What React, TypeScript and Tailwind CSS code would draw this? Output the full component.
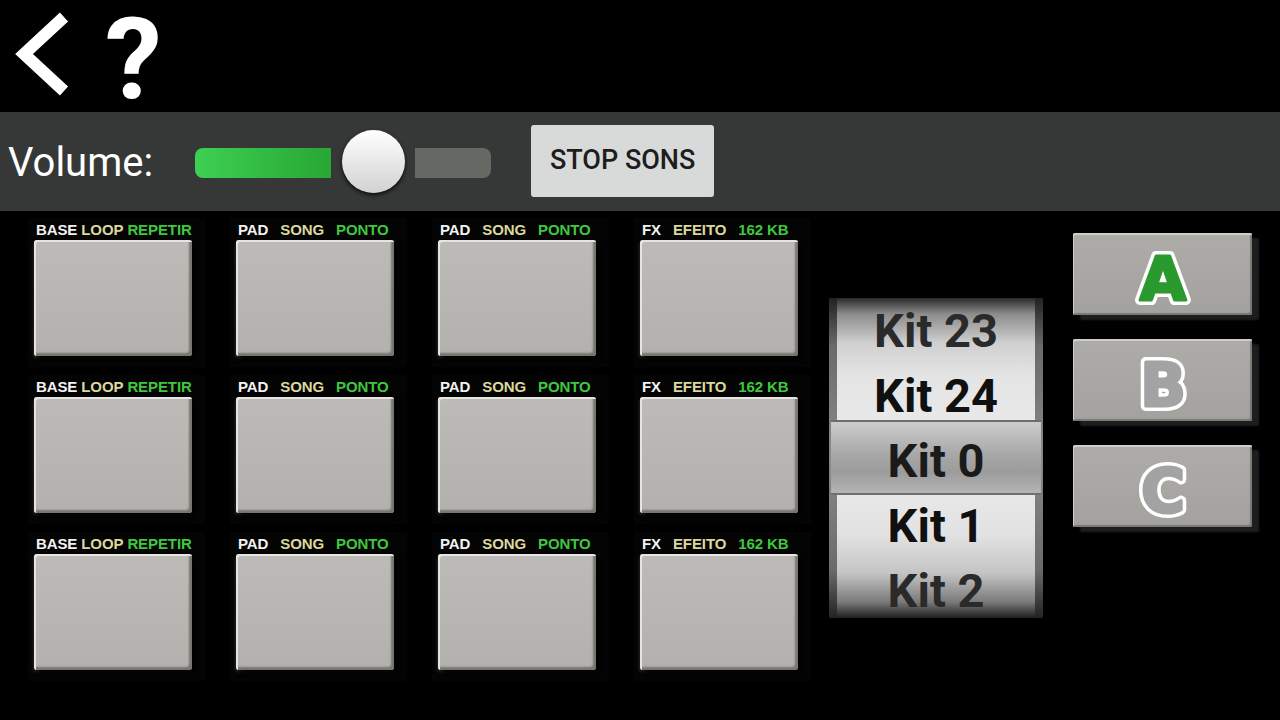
import React from 'react';

type Label = { a: string; b: string; c: string; spaced?: boolean };

const columns: Label[] = [
  { a: 'BASE', b: 'LOOP', c: 'REPETIR' },
  { a: 'PAD', b: 'SONG', c: 'PONTO', spaced: true },
  { a: 'PAD', b: 'SONG', c: 'PONTO', spaced: true },
  { a: 'FX', b: 'EFEITO', c: '162 KB', spaced: true },
];

const kits = [
  { name: 'Kit 23', color: 'text-[#2a2a2a]' },
  { name: 'Kit 24', color: 'text-[#101010]' },
  { name: 'Kit 0', color: 'text-[#1a1a1a]' },
  { name: 'Kit 1', color: 'text-[#101010]' },
  { name: 'Kit 2', color: 'text-[#2a2a2a]' },
];

function Pad({ label }: { label: Label }) {
  return (
    <div className="w-[177px] h-[149px] bg-[#040404] flex flex-col pt-[2px] pl-[6px]">
      <div
        className={`h-[18px] pl-[2px] flex items-center text-[15px] font-bold leading-none tracking-[-0.1px] ${
          label.spaced ? 'gap-[12px]' : 'gap-[4px]'
        }`}
        style={{ fontFamily: '"Liberation Sans", Arial, sans-serif' }}
      >
        <span className="text-[#f2f2f2]">{label.a}</span>
        <span className="text-[#dcd79c]">{label.b}</span>
        <span className="text-[#3fc83f]">{label.c}</span>
      </div>
      <div className="mt-[2px] w-[158px] h-[116px] rounded-[3px] bg-gradient-to-b from-[#bdbbb7] to-[#b3b1ad] shadow-[inset_2px_2px_0_#e6e4e0,inset_-3px_-3px_2px_#77756f,3px_4px_5px_rgba(0,0,0,0.95),-1px_2px_3px_rgba(255,255,240,0.15)]" />
    </div>
  );
}

function LetterButton({ letter, fill }: { letter: string; fill: string }) {
  const common = {
    x: 50,
    y: 65,
    textAnchor: 'middle' as const,
    fontFamily: '"DejaVu Sans", sans-serif',
    fontWeight: 'bold',
    fontSize: 60,
    strokeLinejoin: 'round' as const,
  };
  return (
    <div className="w-[179px] h-[82px] rounded-[2px] bg-gradient-to-b from-[#aeaca8] to-[#a4a29e] shadow-[inset_1px_2px_0_#cfcdc9,inset_-2px_-2px_1px_#7a7874,7px_5px_2px_#1e1e1e] flex items-center justify-center">
      <svg width="100" height="80" viewBox="0 0 100 80" className="mt-[1px]">
        <text {...common} fill="#ffffff" stroke="#ffffff" strokeWidth="10">
          {letter}
        </text>
        <text {...common} fill={fill} stroke={fill} strokeWidth="3">
          {letter}
        </text>
      </svg>
    </div>
  );
}

export default function App() {
  return (
    <div className="w-[1280px] h-[720px] bg-black overflow-hidden" style={{ fontFamily: 'Roboto, "Liberation Sans", sans-serif' }}>
      {/* header */}
      <div className="h-[112px] flex items-start">
        <svg className="ml-[10px] mt-[8px]" width="64" height="92" viewBox="0 0 64 92">
          <polyline points="54,9 14,46 54,83" fill="none" stroke="#ffffff" strokeWidth="12" strokeLinecap="butt" strokeLinejoin="miter" />
        </svg>
        <div className="ml-[31px] mt-[-26px] text-white font-bold text-[114px] leading-normal">?</div>
      </div>

      {/* volume bar */}
      <div className="relative h-[99px] bg-[#363837] flex items-center">
        <span className="ml-[8px] text-white text-[40px] leading-none mt-[3px]">Volume:</span>
        <div className="ml-[42px] flex items-center">
          <div className="w-[136px] h-[30px] rounded-l-[8px] bg-gradient-to-r from-[#3dd052] to-[#27a733] mt-[3px]" />
          <div className="ml-[11px] w-[63px] h-[63px] rounded-full bg-gradient-to-b from-[#ffffff] to-[#d2d2d2] shadow-[0_2px_4px_rgba(0,0,0,0.85)]" />
          <div className="ml-[10px] w-[76px] h-[30px] rounded-r-[8px] bg-[#666863] mt-[3px]" />
        </div>
        <button className="ml-[40px] mb-[2px] w-[183px] h-[72px] rounded-[3px] bg-[#d8dad9] text-[#1d1d1d] text-[27px] font-medium">
          STOP SONS
        </button>
      </div>

      {/* main area */}
      <div className="flex items-start">
        <div className="ml-[28px] mt-[7px] grid grid-cols-[repeat(4,177px)] gap-x-[25px] gap-y-[8px]">
          {[0, 1, 2].map((r) =>
            columns.map((c, i) => <Pad key={`${r}-${i}`} label={c} />)
          )}
        </div>

        {/* kit picker */}
        <div className="ml-[18px] mt-[87px] relative w-[214px] h-[320px] overflow-hidden bg-[linear-gradient(to_bottom,#2a2a2a_0%,#8c8c8c_5%,#cfcfcf_14%,#e4e4e4_24%,#e8e8e8_36%,#e8e8e8_62%,#e2e2e2_74%,#c4c4c4_86%,#7a7a7a_95%,#1e1e1e_100%)]">
          <div className="absolute inset-y-0 left-0 w-[8px] bg-[linear-gradient(to_bottom,#222_0%,#6a6a6a_15%,#8a8a8a_50%,#6a6a6a_85%,#222_100%)]" />
          <div className="absolute inset-y-0 right-0 w-[8px] bg-[linear-gradient(to_bottom,#222_0%,#6a6a6a_15%,#8a8a8a_50%,#6a6a6a_85%,#222_100%)]" />
          <div className="absolute left-[2px] right-[2px] top-[122px] h-[75px] border-y-2 border-[#6e6e6e] bg-[linear-gradient(to_bottom,#cdcdcd_0%,#a8a8a8_45%,#9c9c9c_70%,#b4b4b4_100%)]" />
          <div className="relative flex flex-col">
            {kits.map((k) => (
              <div key={k.name} className={`h-[65px] flex items-center justify-center font-bold text-[47px] leading-none ${k.color}`}>
                {k.name}
              </div>
            ))}
          </div>
        </div>

        {/* bank buttons */}
        <div className="ml-[30px] mt-[22px] flex flex-col gap-[24px]">
          <LetterButton letter="A" fill="#2b9a2e" />
          <LetterButton letter="B" fill="#a3a3a3" />
          <LetterButton letter="C" fill="#a3a3a3" />
        </div>
      </div>
    </div>
  );
}
